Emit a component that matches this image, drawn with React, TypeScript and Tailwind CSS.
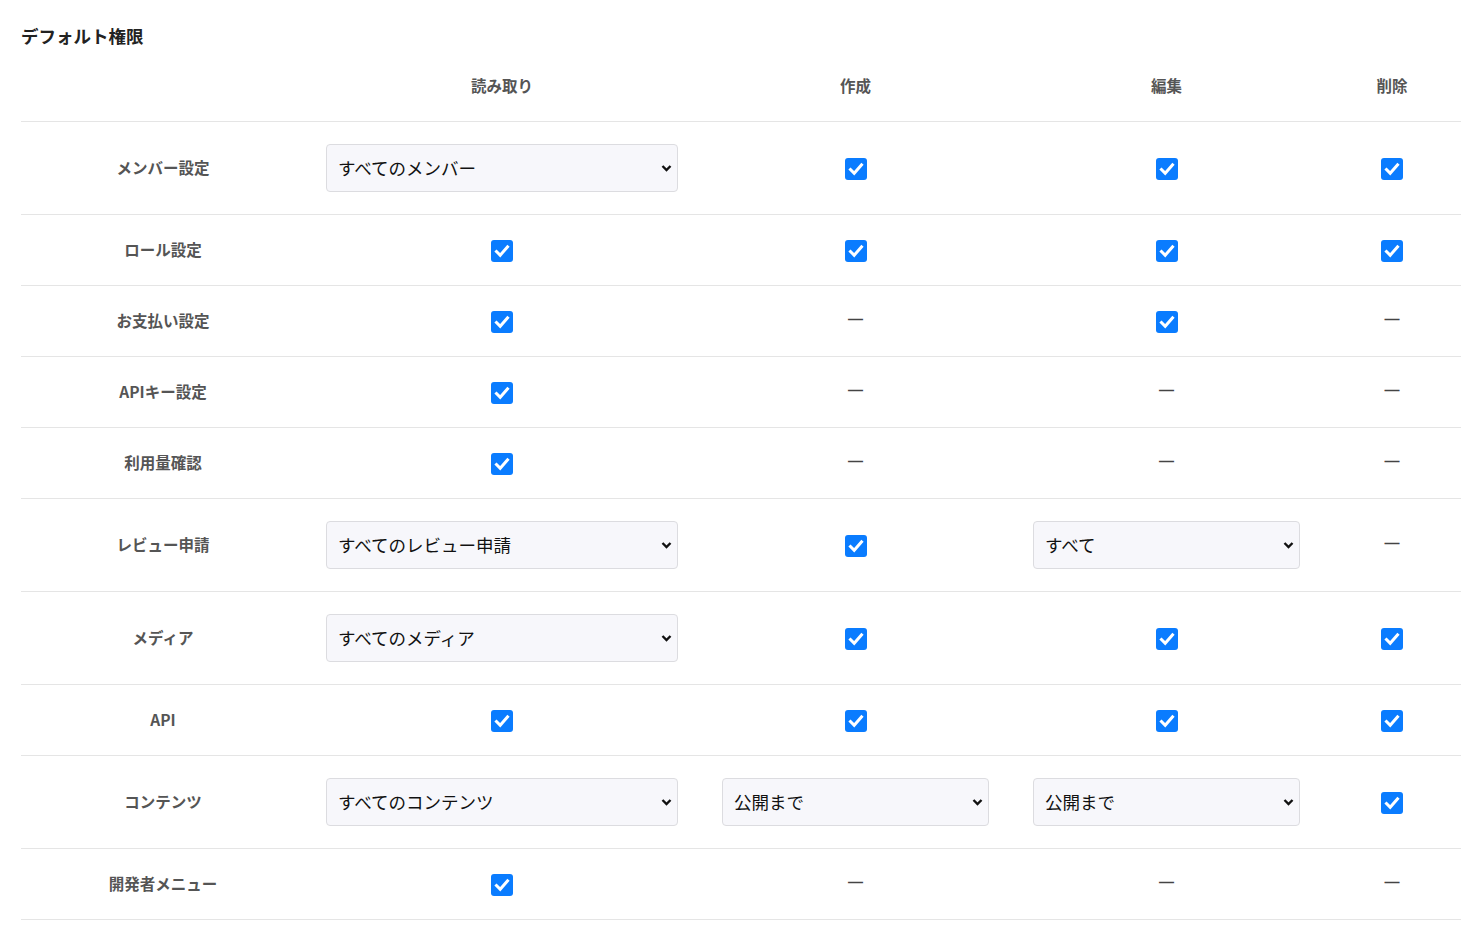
import { useState } from "react";

type Cell =
  | { kind: "check" }
  | { kind: "none" }
  | { kind: "select"; options: string[]; width: string };

type Row = {
  label: string;
  tall?: boolean;
  cells: [Cell, Cell, Cell, Cell];
};

const check: Cell = { kind: "check" };
const none: Cell = { kind: "none" };
const sel = (value: string, width: string): Cell => ({
  kind: "select",
  options: [value],
  width,
});

const rows: Row[] = [
  { label: "メンバー設定", tall: true, cells: [sel("すべてのメンバー", "w-[352px]"), check, check, check] },
  { label: "ロール設定", cells: [check, check, check, check] },
  { label: "お支払い設定", cells: [check, none, check, none] },
  { label: "APIキー設定", cells: [check, none, none, none] },
  { label: "利用量確認", cells: [check, none, none, none] },
  { label: "レビュー申請", tall: true, cells: [sel("すべてのレビュー申請", "w-[352px]"), check, sel("すべて", "w-[267px]"), none] },
  { label: "メディア", tall: true, cells: [sel("すべてのメディア", "w-[352px]"), check, check, check] },
  { label: "API", cells: [check, check, check, check] },
  { label: "コンテンツ", tall: true, cells: [sel("すべてのコンテンツ", "w-[352px]"), sel("公開まで", "w-[267px]"), sel("公開まで", "w-[267px]"), check] },
  { label: "開発者メニュー", cells: [check, none, none, none] },
];

// last column is nudged a bit right of its own centre, as in the design
const colWidths = ["w-[394px]", "w-[313px]", "w-[309px]", "w-[140px] pl-[2px]"];

const Checkbox = () => {
  const [checked, setChecked] = useState(true);
  return (
    <button
      type="button"
      onClick={() => setChecked((prev) => !prev)}
      className={`mt-[1px] w-[22px] h-[22px] rounded-[3px] flex items-center justify-center ${
        checked ? "bg-[#0a7cff]" : "bg-white border border-[#999]"
      }`}
    >
      {checked && (
        <svg width="22" height="22" viewBox="0 0 22 22" fill="none">
          <path
            d="M5.5 11.5 L9.2 15.2 L16.5 6.8"
            stroke="white"
            strokeWidth="3"
            strokeLinecap="square"
          />
        </svg>
      )}
    </button>
  );
};

const Select = ({ options, width }: { options: string[]; width: string }) => (
  <div className={`relative ${width}`}>
    <select className="appearance-none w-full h-[48px] rounded-[4px] border border-[#dcdce0] bg-[#f7f7fb] pl-[11px] pr-[30px] text-[17.5px] text-[#111] outline-none">
      {options.map((o) => (
        <option key={o}>{o}</option>
      ))}
    </select>
    <svg
      className="absolute right-[6px] top-[20px] pointer-events-none"
      width="11"
      height="8"
      viewBox="0 0 11 8"
      fill="none"
    >
      <path d="M1.5 2 L5.5 6 L9.5 2" stroke="#111" strokeWidth="2.4" />
    </svg>
  </div>
);

const renderCell = (cell: Cell) => {
  if (cell.kind === "check") return <Checkbox />;
  if (cell.kind === "none")
    return (
      <span className="text-[15px] font-bold text-[#444] font-['Liberation_Sans',sans-serif] -mt-[3px]">
        —
      </span>
    );
  return <Select options={cell.options} width={cell.width} />;
};

export default function App() {
  return (
    <div className="min-h-screen bg-white pl-[21px] pr-[11px] font-['Noto_Sans_CJK_JP','Noto_Sans',sans-serif]">
      <h2 className="pt-[23px] h-[49px] leading-[26px] text-[17.5px] font-bold text-[#222]">
        デフォルト権限
      </h2>
      <div className="flex h-[73px] items-center border-b border-[#e5e5e5] text-[15.5px] font-bold text-[#555]">
        <div className="w-[284px]" />
        {["読み取り", "作成", "編集", "削除"].map((h, i) => (
          <div key={h} className={`${colWidths[i]} text-center mt-[2px]`}>
            {h}
          </div>
        ))}
      </div>
      {rows.map((row) => (
        <div
          key={row.label}
          className={`flex items-center border-b border-[#e5e5e5] ${
            row.tall ? "h-[93px]" : "h-[71px]"
          }`}
        >
          <div className="w-[284px] text-center text-[15.5px] font-bold text-[#555]">
            {row.label}
          </div>
          {row.cells.map((cell, i) => (
            <div key={i} className={`${colWidths[i]} flex justify-center items-center`}>
              {renderCell(cell)}
            </div>
          ))}
        </div>
      ))}
    </div>
  );
}
